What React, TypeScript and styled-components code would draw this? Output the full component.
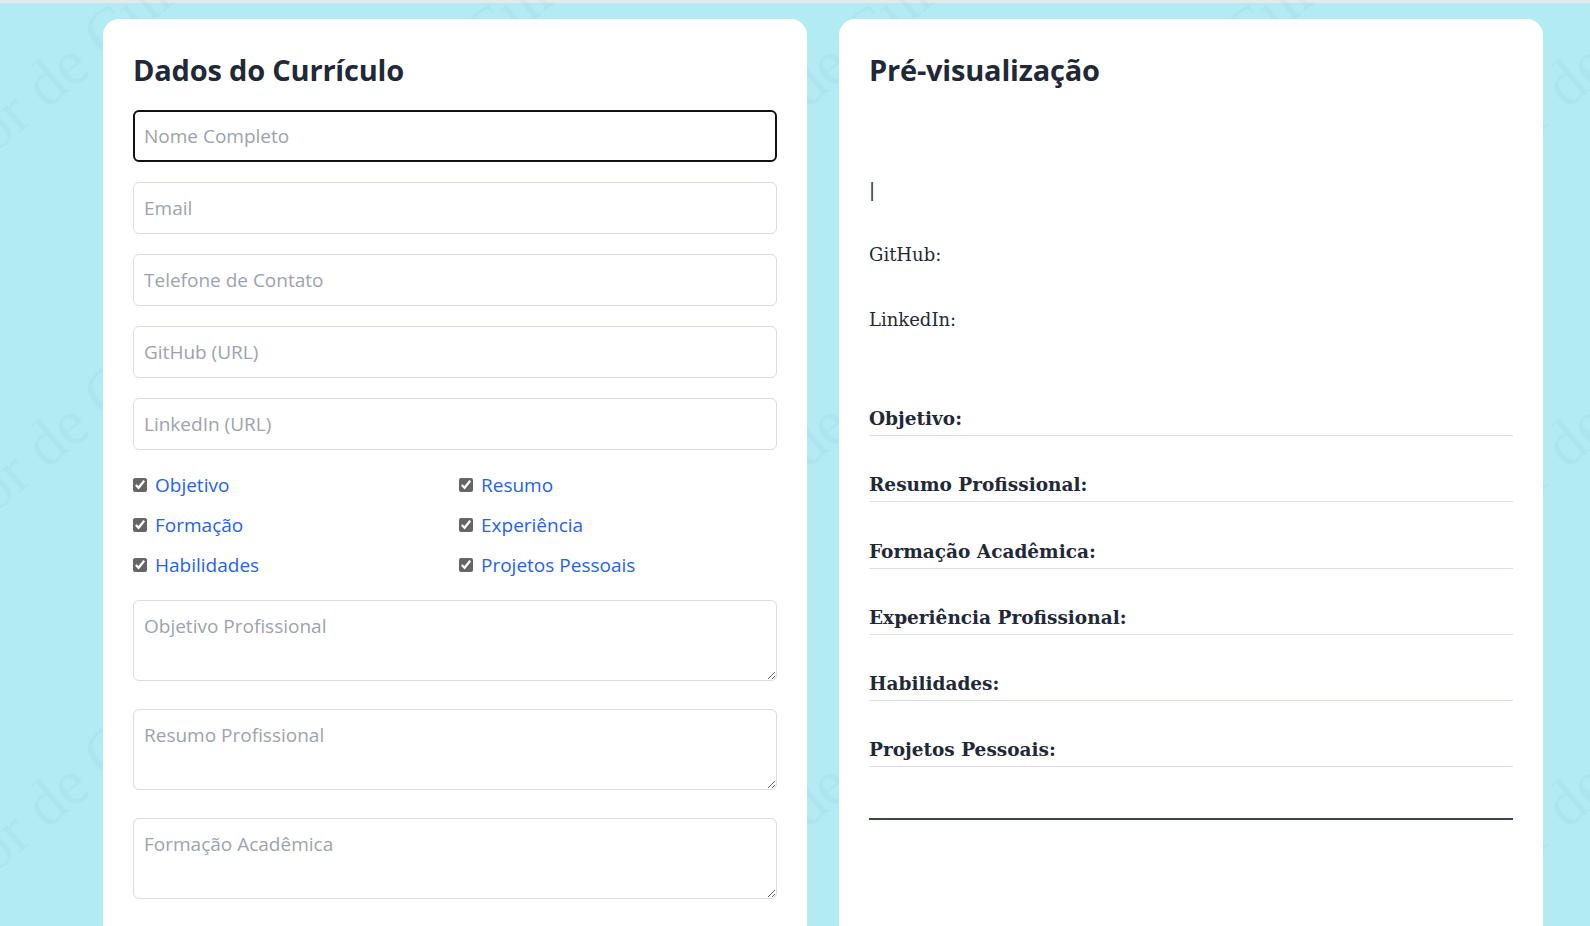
import React from "react";
import styled, { createGlobalStyle } from "styled-components";

const GlobalStyle = createGlobalStyle`
  html, body {
    margin: 0;
    padding: 0;
    overflow: hidden;
    background: #b2ebf2;
  }
  body {
    font-family: "Open Sans", "Noto Sans", sans-serif;
    color: #1f2937;
  }
  * { box-sizing: border-box; }
`;

const TopStrip = styled.div`
  height: 3px;
  background: #e6e8e9;
`;

const Watermark = styled.div`
  position: fixed;
  inset: 3px 0 0 0;
  overflow: hidden;
  pointer-events: none;
  z-index: 0;
  display: grid;
  grid-template-columns: repeat(5, 380px);
  grid-auto-rows: 360px;
  margin-left: -120px;
  margin-top: -120px;
`;

const WatermarkText = styled.span`
  display: flex;
  align-items: center;
  justify-content: center;
  white-space: nowrap;
  font-family: "Liberation Serif", serif;
  font-size: 64px;
  color: rgba(20, 90, 110, 0.035);
  transform: rotate(-40deg);
`;

const Page = styled.main`
  position: relative;
  z-index: 1;
  display: grid;
  grid-template-columns: 704px 704px;
  column-gap: 32px;
  padding: 16px 0 0 103px;
`;

const Card = styled.section`
  background: #ffffff;
  border-radius: 16px;
  padding: 30px;
  display: flex;
  flex-direction: column;
`;

const Title = styled.h2`
  margin: 0 0 20px;
  font-family: "Open Sans", sans-serif;
  font-weight: 700;
  font-size: 29px;
  line-height: 41px;
  color: #1f2937;
  letter-spacing: -0.2px;
`;

const Input = styled.input<{ $focused?: boolean }>`
  display: block;
  width: 100%;
  height: 52px;
  margin: 0 0 20px;
  padding: 0 ${(p) => (p.$focused ? 9 : 10)}px;
  border: ${(p) => (p.$focused ? "2px solid #111" : "1px solid #d9dce2")};
  border-radius: 6px;
  font-family: "Open Sans", sans-serif;
  font-size: 19px;
  color: #1f2937;
  background: #fff;
  outline: none;
  &::placeholder { color: #9ca3af; }
`;

const CheckGrid = styled.div`
  display: grid;
  grid-template-columns: 1fr 1fr;
  column-gap: 8px;
  row-gap: 12px;
  margin: 1px 0 21px;
`;

const CheckLabel = styled.label`
  display: flex;
  align-items: center;
  gap: 8px;
  font-size: 19px;
  line-height: 28px;
  color: #2563eb;
`;

const CheckBox = styled.input`
  width: 14px;
  height: 14px;
  margin: 0;
  accent-color: #666666;
`;

const TextArea = styled.textarea`
  display: block;
  width: 100%;
  height: 81px;
  margin: 0 0 28px;
  padding: 11px 10px;
  border: 1px solid #d9dce2;
  border-radius: 6px;
  font-family: "Open Sans", sans-serif;
  font-size: 19px;
  line-height: 28px;
  color: #1f2937;
  resize: vertical;
  outline: none;
  &::placeholder { color: #9ca3af; }
`;

const Preview = styled.div`
  display: flex;
  flex-direction: column;
  font-family: "DejaVu Serif", serif;
  color: #1f2937;
`;

const NameSlot = styled.h1`
  margin: 0 0 26px;
  height: 40px;
  font-size: 30px;
  line-height: 40px;
`;

const InfoLine = styled.p<{ $gap?: number }>`
  margin: ${(p) => p.$gap ?? 0}px 0 0;
  font-size: 18px;
  line-height: 28px;
`;

const Sections = styled.div`
  display: flex;
  flex-direction: column;
  gap: 37.3px;
  margin-top: 73px;
`;

const SectionTitle = styled.h3`
  margin: 0;
  padding-bottom: 4px;
  border-bottom: 1px solid #dbe0e8;
  font-size: 18.5px;
  font-weight: 700;
  line-height: 24px;
`;

const FooterRule = styled.div`
  margin-top: 51px;
  border-top: 2px solid #3b4452;
`;

const fields = [
  { ph: "Nome Completo", focused: true },
  { ph: "Email" },
  { ph: "Telefone de Contato" },
  { ph: "GitHub (URL)" },
  { ph: "LinkedIn (URL)" },
];

const toggles = [
  "Objetivo",
  "Resumo",
  "Formação",
  "Experiência",
  "Habilidades",
  "Projetos Pessoais",
];

const areas = [
  "Objetivo Profissional",
  "Resumo Profissional",
  "Formação Acadêmica",
  "Experiência Profissional",
  "Habilidades",
  "Projetos Pessoais",
];

const sections = [
  "Objetivo:",
  "Resumo Profissional:",
  "Formação Acadêmica:",
  "Experiência Profissional:",
  "Habilidades:",
  "Projetos Pessoais:",
];

export default function App() {
  const email = "";
  const phone = "";
  return (
    <>
      <GlobalStyle />
      <TopStrip />
      <Watermark aria-hidden>
        {Array.from({ length: 20 }).map((_, i) => (
          <WatermarkText key={i}>Gerador de Currículo</WatermarkText>
        ))}
      </Watermark>
      <Page>
        <Card>
          <Title>Dados do Currículo</Title>
          {fields.map((f) => (
            <Input key={f.ph} placeholder={f.ph} $focused={f.focused} />
          ))}
          <CheckGrid>
            {toggles.map((t) => (
              <CheckLabel key={t}>
                <CheckBox type="checkbox" defaultChecked />
                {t}
              </CheckLabel>
            ))}
          </CheckGrid>
          {areas.map((a) => (
            <TextArea key={a} placeholder={a} />
          ))}
        </Card>
        <Card>
          <Title>Pré-visualização</Title>
          <Preview>
            <NameSlot />
            <InfoLine>{`${email} | ${phone}`}</InfoLine>
            <InfoLine $gap={37}>GitHub: </InfoLine>
            <InfoLine $gap={37}>LinkedIn: </InfoLine>
            <Sections>
              {sections.map((s) => (
                <div key={s}>
                  <SectionTitle>{s}</SectionTitle>
                </div>
              ))}
            </Sections>
            <FooterRule />
          </Preview>
        </Card>
      </Page>
    </>
  );
}
